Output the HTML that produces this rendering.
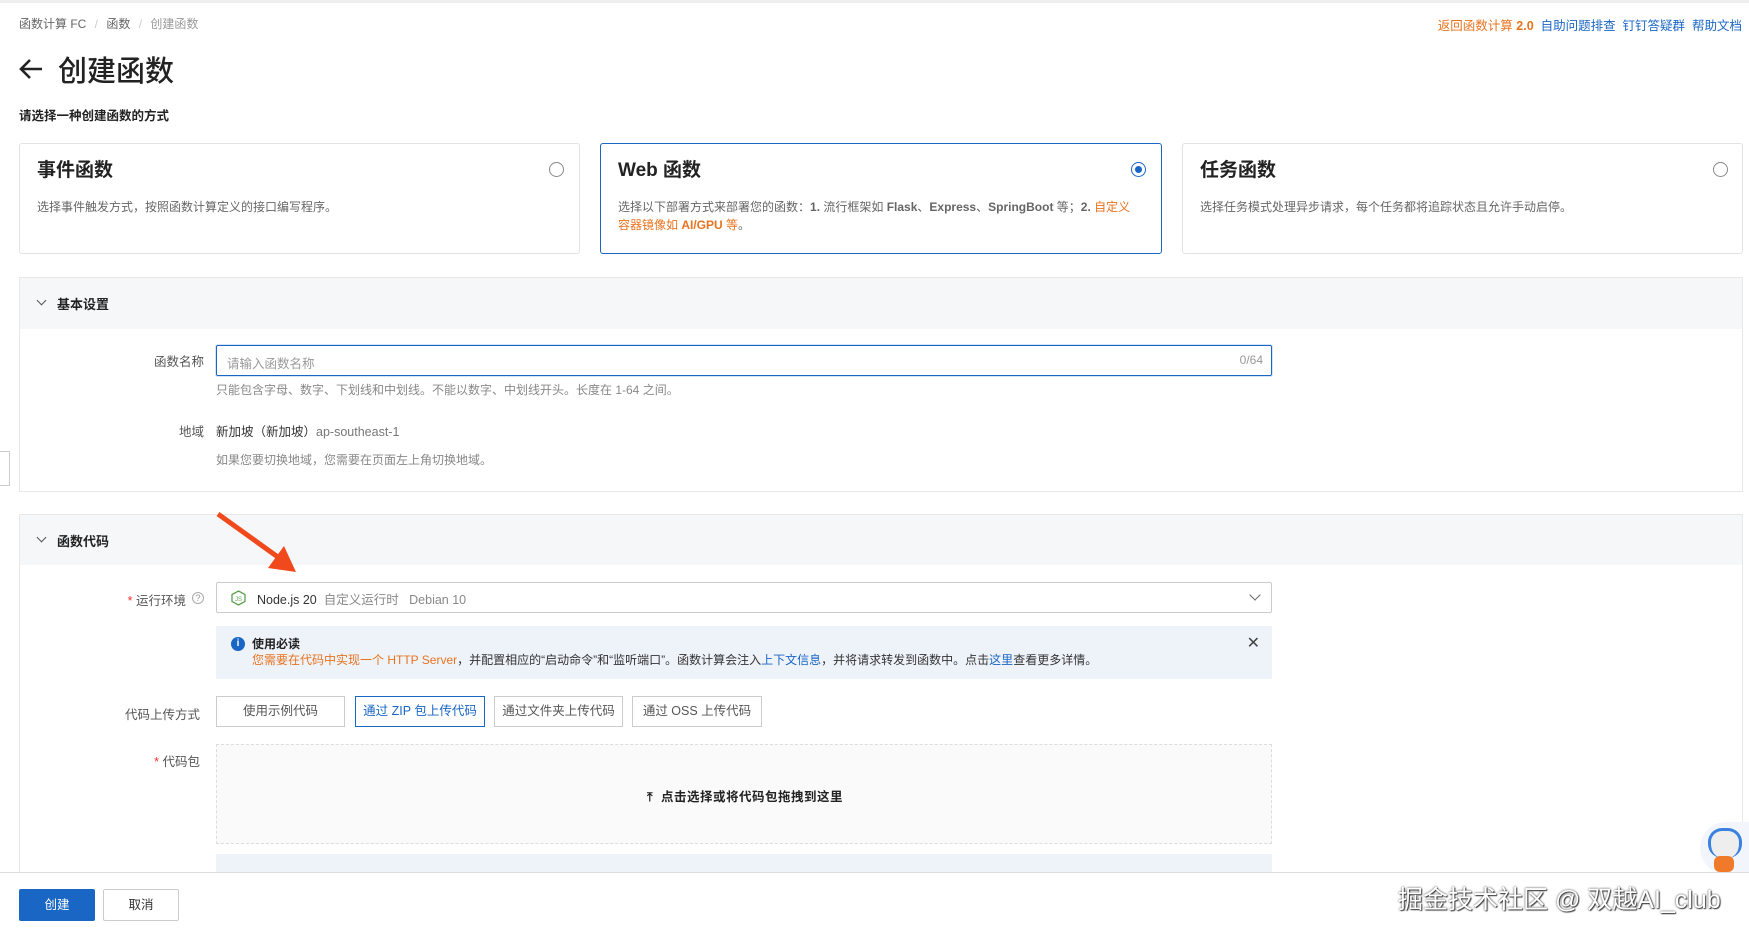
<!DOCTYPE html>
<html><head><meta charset="utf-8">
<style>
*{margin:0;padding:0;box-sizing:border-box}
body{width:1749px;height:936px;overflow:hidden;background:#fff;font-family:"Liberation Sans","Noto Sans CJK SC",sans-serif;color:#333;position:relative;font-size:13px}
.a{position:absolute;white-space:nowrap}
.card{position:absolute;top:143px;height:111px;border:1px solid #e3e3e3;border-radius:3px;background:#fff}
.card .t{position:absolute;left:17px;top:11px;font-size:19px;font-weight:600;color:#222}
.card .d{position:absolute;left:17px;top:54px;font-size:12px;color:#666;line-height:18px;white-space:normal;width:520px}
.radio{position:absolute;top:18px;width:15px;height:15px;border:1px solid #888;border-radius:50%;background:#fff}
.sec{position:absolute;left:19px;width:1724px;border:1px solid #e8e8e8}
.sh{height:51px;background:#f6f7f9;position:relative}
.sh span{position:absolute;left:37px;top:16px;font-size:13px;font-weight:600;color:#222}
.chev{position:absolute;left:18px;top:19px;width:7px;height:7px;border-right:1.3px solid #555;border-bottom:1.3px solid #555;transform:rotate(45deg)}
.lbl{position:absolute;font-size:12.5px;color:#555;text-align:right}
.btn{position:absolute;top:696px;height:31px;border:1px solid #ccc;background:#fff;font-size:12.5px;color:#555;text-align:center;line-height:29px}
</style></head><body>
<div class="a" style="left:0;top:0;width:1749px;height:3px;background:#eee"></div>
<div class="a" style="left:19px;top:15px;font-size:12px;color:#666">函数计算 FC <span style="color:#ccc;margin:0 5px">/</span> 函数 <span style="color:#ccc;margin:0 5px">/</span> <span style="color:#999">创建函数</span></div>
<div class="a" style="right:7px;top:15px;font-size:12.5px;color:#1a66c4"><span style="color:#e8731f">返回函数计算 <b>2.0</b></span>&nbsp;&nbsp;自助问题排查&nbsp;&nbsp;钉钉答疑群&nbsp;&nbsp;帮助文档</div>
<svg class="a" style="left:18px;top:58px" width="26" height="22" viewBox="0 0 26 22"><path d="M24 11H3M12 2L3 11l9 9" fill="none" stroke="#222" stroke-width="2.6"/></svg>
<div class="a" style="left:58px;top:48px;font-size:29px;color:#222;font-weight:500">创建函数</div>
<div class="a" style="left:19px;top:105px;font-size:12.5px;color:#222;font-weight:600">请选择一种创建函数的方式</div>

<div class="card" style="left:19px;width:561px"><div class="t">事件函数</div><div class="d">选择事件触发方式，按照函数计算定义的接口编写程序。</div><div class="radio" style="left:529px"></div></div>
<div class="card" style="left:600px;width:562px;border-color:#1a66c4"><div class="t">Web 函数</div><div class="d">选择以下部署方式来部署您的函数：<b style="font-weight:600">1.</b> 流行框架如 <b style="font-weight:600">Flask</b>、<b style="font-weight:600">Express</b>、<b style="font-weight:600">SpringBoot</b> 等；<b style="font-weight:600">2.</b> <span style="color:#e8731f">自定义容器镜像如 <b>AI/GPU</b> 等</span>。</div><div class="radio" style="left:530px;border-color:#1a66c4"><div style="position:absolute;left:3px;top:3px;width:7px;height:7px;border-radius:50%;background:#1a66c4"></div></div></div>
<div class="card" style="left:1182px;width:561px"><div class="t">任务函数</div><div class="d">选择任务模式处理异步请求，每个任务都将追踪状态且允许手动启停。</div><div class="radio" style="left:530px"></div></div>

<div class="sec" style="top:277px;height:215px"><div class="sh"><div class="chev"></div><span>基本设置</span></div></div>
<div class="lbl" style="left:120px;width:84px;top:351px">函数名称</div>
<div class="a" style="left:216px;top:345px;width:1056px;height:31px;border:1px solid #1a66c4;border-radius:2px;box-shadow:0 0 0 1px #d5e4f7"><span class="a" style="left:10px;top:7px;font-size:12.5px;color:#999">请输入函数名称</span><span class="a" style="right:8px;top:7px;font-size:12px;color:#999">0/64</span></div>
<div class="a" style="left:216px;top:381px;font-size:12px;color:#888">只能包含字母、数字、下划线和中划线。不能以数字、中划线开头。长度在 1-64 之间。</div>
<div class="lbl" style="left:120px;width:84px;top:421px">地域</div>
<div class="a" style="left:216px;top:421px;font-size:12.5px;color:#333">新加坡（新加坡）<span style="color:#777">ap-southeast-1</span></div>
<div class="a" style="left:216px;top:451px;font-size:12px;color:#888">如果您要切换地域，您需要在页面左上角切换地域。</div>
<div class="a" style="left:0;top:451px;width:10px;height:35px;border:1px solid #ccc;border-left:none;background:#fff"></div>

<div class="sec" style="top:514px;height:380px"><div class="sh" style="height:50px"><div class="chev"></div><span>函数代码</span></div></div>
<svg class="a" style="left:210px;top:510px" width="90" height="65"><path d="M8 4L72 50" stroke="#f04a1c" stroke-width="5"/><path d="M58 58L86 62 74 36Z" fill="#f04a1c"/></svg>
<div class="lbl" style="left:100px;width:86px;top:590px"><span style="color:#e33">*</span> 运行环境</div>
<div class="a" style="left:192px;top:592px;width:12px;height:12px;border:1px solid #aaa;border-radius:50%;font-size:9px;color:#999;text-align:center;line-height:11px">?</div>
<div class="a" style="left:216px;top:582px;width:1056px;height:31px;border:1px solid #ccc;border-radius:2px">
<svg class="a" style="left:14px;top:7px" width="15" height="16" viewBox="0 0 15 16"><path d="M7.5 1L14 4.5v7L7.5 15 1 11.5v-7z" fill="none" stroke="#5fa04e" stroke-width="1.3"/><text x="4" y="11" font-size="6" fill="#5fa04e" font-family="Liberation Sans">JS</text></svg>
<span class="a" style="left:40px;top:6px;font-size:12.5px;color:#333">Node.js 20 &nbsp;<span style="color:#888">自定义运行时 &nbsp; Debian 10</span></span>
<div class="a" style="right:12px;top:8px;width:8px;height:8px;border-right:1.3px solid #666;border-bottom:1.3px solid #666;transform:rotate(45deg)"></div></div>
<div class="a" style="left:216px;top:626px;width:1056px;height:53px;background:#eef3fa">
<div class="a" style="left:15px;top:11px;width:14px;height:14px;border-radius:50%;background:#1a66c4;color:#fff;font-size:10px;font-weight:bold;text-align:center;line-height:14px">i</div>
<span class="a" style="left:36px;top:9px;font-size:12px;font-weight:600;color:#222">使用必读</span>
<span class="a" style="left:36px;top:25px;font-size:12px;color:#333"><span style="color:#e8731f">您需要在代码中实现一个 HTTP Server</span>，并配置相应的“启动命令”和“监听端口”。函数计算会注入<span style="color:#1a66c4">上下文信息</span>，并将请求转发到函数中。点击<span style="color:#1a66c4">这里</span>查看更多详情。</span>
<span class="a" style="right:12px;top:7px;font-size:16px;color:#444">✕</span></div>
<div class="lbl" style="left:100px;width:100px;top:704px">代码上传方式</div>
<div class="btn" style="left:216px;width:129px">使用示例代码</div>
<div class="btn" style="left:355px;width:130px;border-color:#1a66c4;color:#1a66c4">通过 ZIP 包上传代码</div>
<div class="btn" style="left:494px;width:129px">通过文件夹上传代码</div>
<div class="btn" style="left:632px;width:130px">通过 OSS 上传代码</div>
<div class="lbl" style="left:120px;width:80px;top:751px"><span style="color:#e33">*</span> 代码包</div>
<div class="a" style="left:216px;top:744px;width:1056px;height:100px;border:1px dashed #ddd;background:#fafafa"><span class="a" style="left:430px;top:41px;font-size:12.5px;color:#222;font-weight:600;letter-spacing:0.5px">⤒ &nbsp;点击选择或将代码包拖拽到这里</span></div>
<div class="a" style="left:216px;top:854px;width:1056px;height:18px;background:#eef3fa"></div>
<div class="a" style="left:1700px;top:822px;width:49px;height:52px;border-radius:26px 0 0 26px;background:#f2f6fc"><div class="a" style="left:8px;top:6px;width:34px;height:30px;border-radius:14px;background:#eee;border:3px solid #3b82e0;border-bottom:none"></div><div class="a" style="left:14px;top:34px;width:20px;height:16px;border-radius:6px;background:#f07a2a"></div></div>

<div class="a" style="left:0;top:872px;width:1749px;height:64px;background:#fff;border-top:1px solid #ddd"></div>
<div class="a" style="left:19px;top:889px;width:76px;height:32px;background:#1a66c4;border-radius:2px;color:#fff;font-size:12.5px;text-align:center;line-height:32px">创建</div>
<div class="a" style="left:103px;top:889px;width:76px;height:32px;border:1px solid #ccc;border-radius:2px;color:#333;font-size:12.5px;text-align:center;line-height:30px">取消</div>
<div class="a" style="left:1398px;top:880px;font-size:25px;color:#fff;text-shadow:0 0 2px #333,1px 1px 1px #444">掘金技术社区 @ 双越AI_club</div>
</body></html>
